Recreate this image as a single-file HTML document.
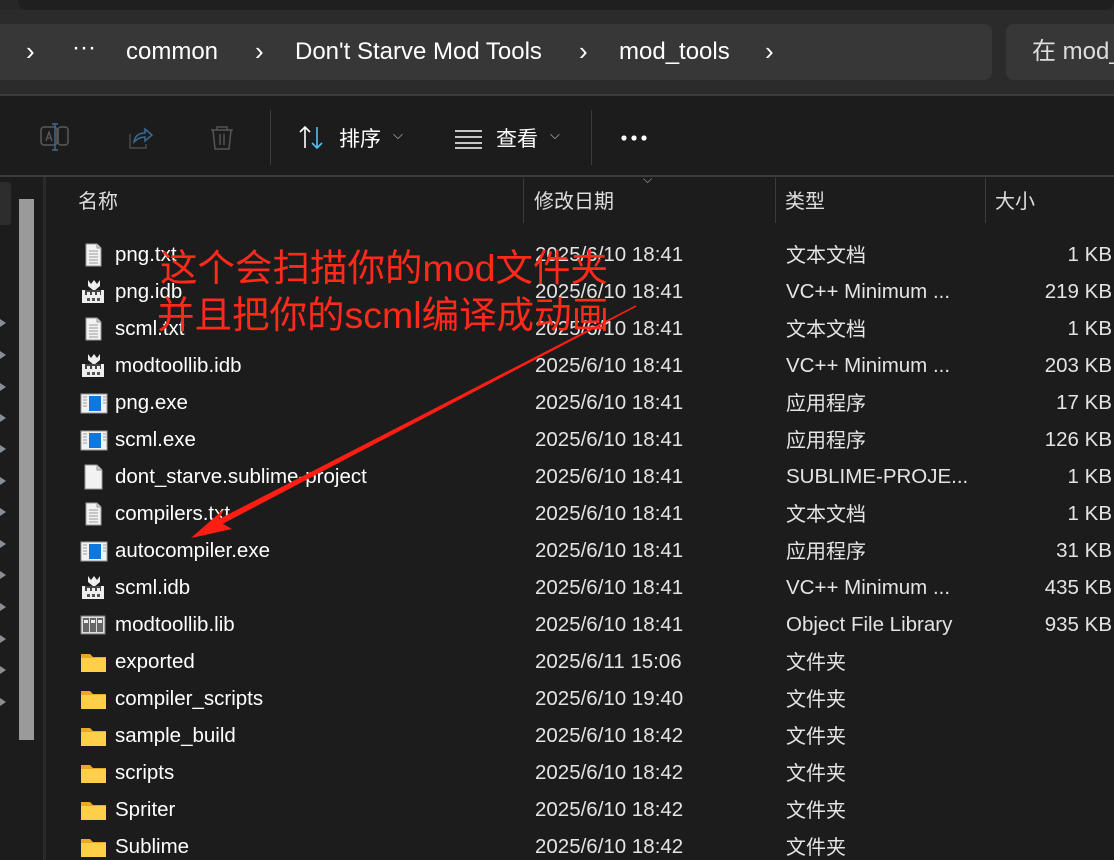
<!DOCTYPE html>
<html><head><meta charset="utf-8">
<style>
*{margin:0;padding:0;box-sizing:border-box}
html,body{width:1114px;height:860px;overflow:hidden}
body{background:#1c1c1c;font-family:"Segoe UI","Liberation Sans","Noto Sans CJK SC",sans-serif;color:#fff;position:relative}
.abs{position:absolute}
.top{left:0;top:0;width:1114px;height:95px;background:#2b2b2b}
.tabstrip{left:0;top:0;width:1114px;height:10px;background:#272727}
.tabin{left:18px;top:-10px;width:1096px;height:20px;background:#1f1f1f;border-radius:8px}
.addr{left:0;top:24px;width:992px;height:56px;background:#373737;border-radius:0 8px 8px 0}
.search{left:1006px;top:24px;width:108px;height:56px;background:#373737;border-radius:8px 0 0 8px;overflow:hidden;font-size:24px;color:#ddd;white-space:nowrap;padding:13px 0 0 26px;line-height:30px}
.bc{top:37px;font-size:24px;color:#fff;white-space:nowrap;line-height:30px}
.chev{top:36px;font-size:26px;color:#fff;line-height:30px}
.line{background:#3c3c3c}
.tb{top:126px;font-size:21px;color:#fff;line-height:28px}
.hdr{top:189px;font-size:20px;color:#ddd;line-height:26px}
.row{position:absolute;left:0;width:1114px;height:37px;font-size:20.5px}
.row span{line-height:27px}
.row .ic{position:absolute;left:80px;top:6px;width:28px;height:26px}
.row .n{position:absolute;left:115px;top:5px;color:#fff;white-space:nowrap}
.row .d{position:absolute;left:535px;top:5px;color:#e4e4e4}
.row .t{position:absolute;left:786px;top:5px;color:#e4e4e4;white-space:nowrap}
.row .s{position:absolute;right:2px;top:5px;color:#e4e4e4}
.row .t.cj{font-family:"Noto Sans CJK SC",sans-serif;font-size:20px;top:4px}
.ann{left:160px;font-size:37.5px;color:#ff2a1a;font-family:"Liberation Sans","Noto Sans CJK SC",sans-serif;white-space:nowrap;line-height:44px}
.tri{left:0;width:0;height:0;border-top:4px solid transparent;border-bottom:4px solid transparent;border-left:6px solid #8a8f96}
</style></head><body>
<svg width="0" height="0" style="position:absolute">
<defs>
<g id="txt"><path d="M6 2h11l4 4v18H6z" fill="#f2f2f2" stroke="#9a9a9a"/><path d="M17 2v4h4" fill="#ccc" stroke="#9a9a9a"/><path d="M9 9h9M9 12h9M9 15h9M9 18h9M9 21h9" stroke="#9a9a9a"/></g>
<g id="idb"><path d="M8 1l3 4 3-4 3 4 3-4v6l-6 5-6-5z" fill="#eee"/><rect x="2" y="11" width="22" height="13" fill="#eee"/><rect x="5" y="11" width="16" height="5" fill="#444"/><rect x="7" y="13" width="3" height="3" fill="#eee"/><rect x="12" y="13" width="3" height="3" fill="#eee"/><rect x="17" y="13" width="3" height="3" fill="#eee"/><rect x="7" y="19" width="3" height="3" fill="#555"/><rect x="12" y="19" width="3" height="3" fill="#555"/><rect x="17" y="19" width="3" height="3" fill="#555"/></g>
<g id="exe"><rect x="1" y="4" width="26" height="19" fill="#f2f2f2" stroke="#999"/><rect x="9" y="6" width="12" height="15" fill="#1177dd"/><path d="M3 7h4M3 10h4M3 13h4M3 16h4M23 7h3M23 10h3M23 13h3" stroke="#999"/></g>
<g id="blank"><path d="M5 1h12l5 5v19H5z" fill="#f2f2f2" stroke="#999"/><path d="M17 1v5h5" fill="#ccc" stroke="#999"/></g>
<g id="lib"><rect x="1" y="4" width="24" height="18" fill="#ddd" stroke="#777"/><rect x="3" y="6" width="6" height="14" fill="#666"/><rect x="10" y="6" width="6" height="14" fill="#666"/><rect x="17" y="6" width="6" height="14" fill="#666"/><rect x="4" y="8" width="4" height="3" fill="#eee"/><rect x="11" y="8" width="4" height="3" fill="#eee"/><rect x="18" y="8" width="4" height="3" fill="#eee"/></g>
<g id="fold"><path d="M1 5h9l3 3h13v15H1z" fill="#e8a82a"/><path d="M1 9h25v14H1z" fill="#ffcf4a"/></g>
</defs></svg>

<div class="abs top"></div>
<div class="abs tabstrip"></div>
<div class="abs tabin"></div>
<div class="abs addr"></div>
<div class="abs search">在 mod_tools</div>
<div class="abs chev" style="left:26px">›</div>
<div class="abs bc" style="left:72px;top:33px">···</div>
<div class="abs bc" style="left:126px">common</div>
<div class="abs chev" style="left:255px">›</div>
<div class="abs bc" style="left:295px">Don't Starve Mod Tools</div>
<div class="abs chev" style="left:579px">›</div>
<div class="abs bc" style="left:619px">mod_tools</div>
<div class="abs chev" style="left:765px">›</div>

<div class="abs line" style="left:0;top:94px;width:1114px;height:2px"></div>
<svg class="abs" style="left:38px;top:122px" width="200" height="32">
<rect x="3" y="5" width="16" height="18" rx="3" fill="none" stroke="#5a5a5a" stroke-width="1.5"/><rect x="20" y="5" width="10" height="18" rx="3" fill="none" stroke="#5a5a5a" stroke-width="1.5"/><path d="M17 2v26M14 2h6M14 28h6" stroke="#3a6a90" stroke-width="1.5"/><path d="M8 19l3-9 3 9M9 16h4" stroke="#5a5a5a" fill="none" stroke-width="1.3"/>
<path d="M92 12v14h16v-4" fill="none" stroke="#4a4a4a" stroke-width="1.5"/><path d="M96 20c1-6 5-9 11-9v-4l7 6-7 6v-4c-5 0-8 2-11 5z" fill="none" stroke="#3a6a90" stroke-width="1.5"/>
<path d="M173 8h22M179 8V5h10v3M175 8l2 19h14l2-19M182 12v11M186 12v11" fill="none" stroke="#555" stroke-width="1.5"/>
</svg>
<div class="abs line" style="left:270px;top:110px;width:1px;height:55px"></div>
<svg class="abs" style="left:298px;top:124px" width="30" height="28"><path d="M7 24V3M2 8l5-5 5 5" fill="none" stroke="#fff" stroke-width="1.6"/><path d="M19 3v21M14 19l5 5 5-5" fill="none" stroke="#4cc2ff" stroke-width="1.6"/></svg>
<div class="abs tb" style="left:339px">排序</div>
<div class="abs" style="left:393px;top:127px;font-size:13px;color:#ccc">⌵</div>
<svg class="abs" style="left:454px;top:128px" width="30" height="22"><path d="M1 3h27M1 9h27M1 15h27M1 20h27" stroke="#fff" stroke-width="1.4"/></svg>
<div class="abs tb" style="left:496px">查看</div>
<div class="abs" style="left:550px;top:127px;font-size:13px;color:#ccc">⌵</div>
<div class="abs line" style="left:591px;top:110px;width:1px;height:55px"></div>
<svg class="abs" style="left:620px;top:133px" width="32" height="10"><circle cx="4" cy="5" r="2.6" fill="#fff"/><circle cx="14" cy="5" r="2.6" fill="#fff"/><circle cx="24" cy="5" r="2.6" fill="#fff"/></svg>
<div class="abs line" style="left:0;top:175px;width:1114px;height:2px"></div>

<div class="abs" style="left:0;top:182px;width:11px;height:43px;background:#2d2d2d;border-radius:0 3px 3px 0"></div>
<div class="abs" style="left:19px;top:199px;width:15px;height:541px;background:#9a9a9a"></div>
<div class="abs" style="left:43px;top:177px;width:3px;height:683px;background:#2a2a2a"></div>
<div class="abs tri" style="top:319px"></div><div class="abs tri" style="top:351px"></div><div class="abs tri" style="top:383px"></div><div class="abs tri" style="top:414px"></div><div class="abs tri" style="top:445px"></div><div class="abs tri" style="top:477px"></div><div class="abs tri" style="top:508px"></div><div class="abs tri" style="top:540px"></div><div class="abs tri" style="top:571px"></div><div class="abs tri" style="top:603px"></div><div class="abs tri" style="top:635px"></div><div class="abs tri" style="top:666px"></div><div class="abs tri" style="top:698px"></div>

<div class="abs hdr" style="left:78px">名称</div>
<div class="abs line" style="left:523px;top:178px;width:1px;height:45px"></div>
<div class="abs hdr" style="left:534px">修改日期</div>
<div class="abs" style="left:643px;top:172px;font-size:12px;color:#aaa">⌵</div>
<div class="abs line" style="left:775px;top:178px;width:1px;height:45px"></div>
<div class="abs hdr" style="left:785px">类型</div>
<div class="abs line" style="left:985px;top:178px;width:1px;height:45px"></div>
<div class="abs hdr" style="left:995px">大小</div>

<div class="row" style="top:236px"><svg class="ic"><use href="#txt"/></svg><span class="n">png.txt</span><span class="d">2025/6/10 18:41</span><span class="t cj">文本文档</span><span class="s">1 KB</span></div>
<div class="row" style="top:273px"><svg class="ic"><use href="#idb"/></svg><span class="n">png.idb</span><span class="d">2025/6/10 18:41</span><span class="t">VC++ Minimum ...</span><span class="s">219 KB</span></div>
<div class="row" style="top:310px"><svg class="ic"><use href="#txt"/></svg><span class="n">scml.txt</span><span class="d">2025/6/10 18:41</span><span class="t cj">文本文档</span><span class="s">1 KB</span></div>
<div class="row" style="top:347px"><svg class="ic"><use href="#idb"/></svg><span class="n">modtoollib.idb</span><span class="d">2025/6/10 18:41</span><span class="t">VC++ Minimum ...</span><span class="s">203 KB</span></div>
<div class="row" style="top:384px"><svg class="ic"><use href="#exe"/></svg><span class="n">png.exe</span><span class="d">2025/6/10 18:41</span><span class="t cj">应用程序</span><span class="s">17 KB</span></div>
<div class="row" style="top:421px"><svg class="ic"><use href="#exe"/></svg><span class="n">scml.exe</span><span class="d">2025/6/10 18:41</span><span class="t cj">应用程序</span><span class="s">126 KB</span></div>
<div class="row" style="top:458px"><svg class="ic"><use href="#blank"/></svg><span class="n">dont_starve.sublime-project</span><span class="d">2025/6/10 18:41</span><span class="t">SUBLIME-PROJE...</span><span class="s">1 KB</span></div>
<div class="row" style="top:495px"><svg class="ic"><use href="#txt"/></svg><span class="n">compilers.txt</span><span class="d">2025/6/10 18:41</span><span class="t cj">文本文档</span><span class="s">1 KB</span></div>
<div class="row" style="top:532px"><svg class="ic"><use href="#exe"/></svg><span class="n">autocompiler.exe</span><span class="d">2025/6/10 18:41</span><span class="t cj">应用程序</span><span class="s">31 KB</span></div>
<div class="row" style="top:569px"><svg class="ic"><use href="#idb"/></svg><span class="n">scml.idb</span><span class="d">2025/6/10 18:41</span><span class="t">VC++ Minimum ...</span><span class="s">435 KB</span></div>
<div class="row" style="top:606px"><svg class="ic"><use href="#lib"/></svg><span class="n">modtoollib.lib</span><span class="d">2025/6/10 18:41</span><span class="t">Object File Library</span><span class="s">935 KB</span></div>
<div class="row" style="top:643px"><svg class="ic"><use href="#fold"/></svg><span class="n">exported</span><span class="d">2025/6/11 15:06</span><span class="t cj">文件夹</span></div>
<div class="row" style="top:680px"><svg class="ic"><use href="#fold"/></svg><span class="n">compiler_scripts</span><span class="d">2025/6/10 19:40</span><span class="t cj">文件夹</span></div>
<div class="row" style="top:717px"><svg class="ic"><use href="#fold"/></svg><span class="n">sample_build</span><span class="d">2025/6/10 18:42</span><span class="t cj">文件夹</span></div>
<div class="row" style="top:754px"><svg class="ic"><use href="#fold"/></svg><span class="n">scripts</span><span class="d">2025/6/10 18:42</span><span class="t cj">文件夹</span></div>
<div class="row" style="top:791px"><svg class="ic"><use href="#fold"/></svg><span class="n">Spriter</span><span class="d">2025/6/10 18:42</span><span class="t cj">文件夹</span></div>
<div class="row" style="top:828px"><svg class="ic"><use href="#fold"/></svg><span class="n">Sublime</span><span class="d">2025/6/10 18:42</span><span class="t cj">文件夹</span></div>

<div class="abs ann" style="top:246px">这个会扫描你的mod文件夹</div>
<div class="abs ann" style="top:293px;left:157px">并且把你的scml编译成动画</div>
<svg class="abs" style="left:0;top:0" width="1114" height="860">
<path d="M636 306 L215 527 L213 523 Z" fill="#ff1e14" stroke="#ff1e14" stroke-width="1.5"/>
<path d="M191 538 L224 509 L218 521 L232 529 Z" fill="#ff1e14"/>
</svg>
</body></html>
